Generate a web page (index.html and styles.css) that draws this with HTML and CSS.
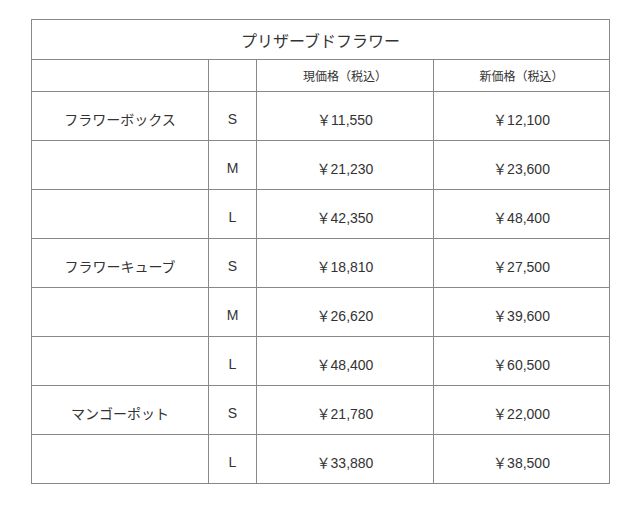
FILE: index.html
```html
<!DOCTYPE html>
<html lang="ja">
<head>
<meta charset="utf-8">
<title>プリザーブドフラワー</title>
<link rel="stylesheet" href="styles.css">
</head>
<body>
<table class="price">
  <colgroup>
    <col class="c-name">
    <col class="c-size">
    <col class="c-now">
    <col class="c-new">
  </colgroup>
  <tr class="title-row"><th colspan="4">プリザーブドフラワー</th></tr>
  <tr class="head-row"><th></th><th></th><th>現価格（税込）</th><th>新価格（税込）</th></tr>
  <tr><td>フラワーボックス</td><td>S</td><td>￥11,550</td><td>￥12,100</td></tr>
  <tr><td></td><td>M</td><td>￥21,230</td><td>￥23,600</td></tr>
  <tr><td></td><td>L</td><td>￥42,350</td><td>￥48,400</td></tr>
  <tr><td>フラワーキューブ</td><td>S</td><td>￥18,810</td><td>￥27,500</td></tr>
  <tr><td></td><td>M</td><td>￥26,620</td><td>￥39,600</td></tr>
  <tr><td></td><td>L</td><td>￥48,400</td><td>￥60,500</td></tr>
  <tr><td>マンゴーポット</td><td>S</td><td>￥21,780</td><td>￥22,000</td></tr>
  <tr><td></td><td>L</td><td>￥33,880</td><td>￥38,500</td></tr>
</table>
</body>
</html>
```

FILE: styles.css
```css
html, body {
  margin: 0;
  padding: 0;
  background: #fff;
}
body {
  font-family: "Liberation Sans", "Noto Sans CJK JP", sans-serif;
  color: #333;
}
.price {
  border-collapse: collapse;
  margin: 19px 0 0 31px;
  table-layout: fixed;
  width: 578px;
}
.c-name { width: 177px; }
.c-size { width: 48px; }
.c-now { width: 177px; }
.c-new { width: 176px; }
.price th,
.price td {
  border: 1px solid #888;
  padding: 0;
  text-align: center;
  font-weight: normal;
  font-size: 14px;
}
.title-row th {
  height: 39px;
  font-size: 16px;
}
.head-row th {
  height: 31px;
  font-size: 12px;
}
.price td {
  height: 49px;
  padding-top: 6px;
  box-sizing: border-box;
}
```
